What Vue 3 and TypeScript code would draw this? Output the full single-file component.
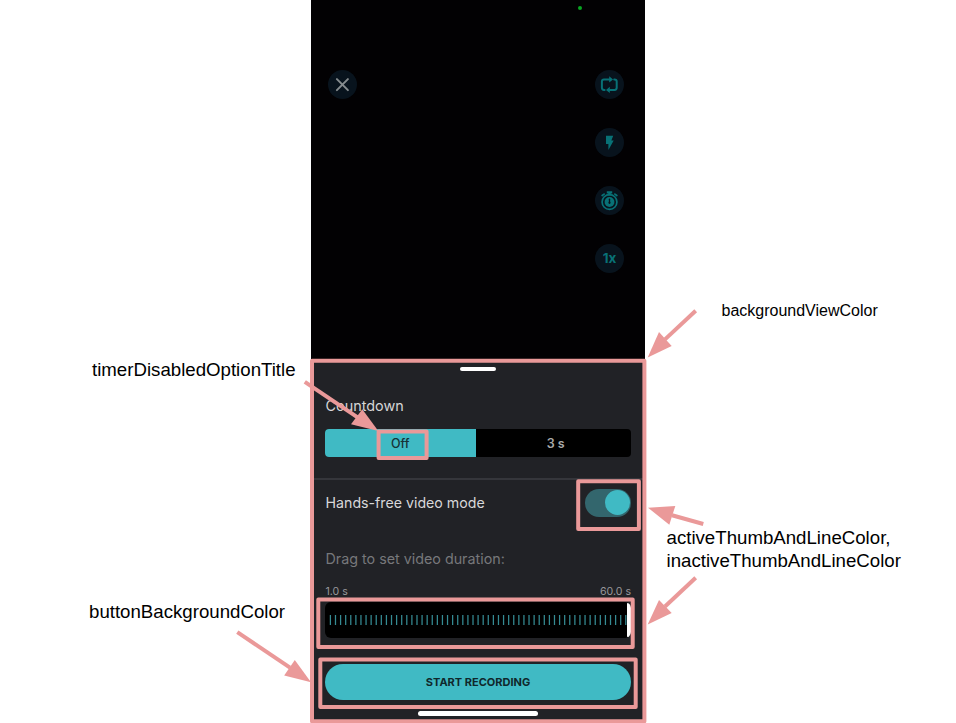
<script setup lang="ts">
interface Label {
  id: string
  lines: string[]
}

interface Frame {
  x: number
  y: number
  w: number
  h: number
}

interface Arrow {
  from: [number, number]
  base: [number, number]
  head: string
}

const ticks: number[] = Array.from({ length: 59 }, (_, i) => 5.4 + i * 5.093)

const labels: Label[] = [
  { id: 'timer', lines: ['timerDisabledOptionTitle'] },
  { id: 'background', lines: ['backgroundViewColor'] },
  { id: 'colors', lines: ['activeThumbAndLineColor,', 'inactiveThumbAndLineColor'] },
  { id: 'button', lines: ['buttonBackgroundColor'] },
]

const frames: Frame[] = [
  { x: 312, y: 360.7, w: 332.4, h: 360.6 },
  { x: 378.6, y: 431.5, w: 48, h: 26.4 },
  { x: 578.2, y: 481.3, w: 60.7, h: 47.6 },
  { x: 318.3, y: 599.5, w: 314.4, h: 47.4 },
  { x: 320.3, y: 659.5, w: 315.4, h: 47.4 },
]

const arrows: Arrow[] = [
  { from: [304.8, 381.8], base: [358, 417.7], head: '378.3,431 362.3,409.3 351,424.3' },
  { from: [695.7, 310.7], base: [665, 339.4], head: '647.7,357.5 659,332 671.7,346' },
  { from: [703.3, 524], base: [672, 515.2], head: '648,507.7 675.3,506 669.3,524.7' },
  { from: [695.7, 577.7], base: [665, 606.5], head: '647.7,624.5 659,600 671.7,613' },
  { from: [237.3, 632.2], base: [290, 667.6], head: '311,682.2 294.8,660 284.2,675.6' },
]
</script>

<template>
  <main class="canvas">
    <section class="phone">
      <div class="camera">
        <i class="live-dot"></i>
        <div class="round close">
          <svg viewBox="0 0 29 29"><path d="M8.9 9.1 19.9 20.1M19.9 9.1 8.9 20.1" fill="none" stroke="#858b8e" stroke-width="2" stroke-linecap="round" /></svg>
        </div>
        <div class="tools">
          <div class="round">
            <svg viewBox="0 0 29 29">
              <g fill="none" stroke="#087176" stroke-width="2" stroke-linecap="round" stroke-linejoin="round">
                <path d="M9.6 19.9H9Q6.9 19.9 6.9 17.8V11.5Q6.9 9.4 9 9.4H15.5" />
                <path d="M19.2 9.4H19.6Q21.7 9.4 21.7 11.5V17.8Q21.7 19.9 19.6 19.9H13.5" />
              </g>
              <path d="M14.2 6.2 18 9.4 14.2 12.6ZM14.8 16.7 11 19.9 14.8 23.1Z" fill="#087176" />
            </svg>
          </div>
          <div class="round">
            <svg viewBox="0 0 29 29"><path d="M11 7.8H18.2L16.4 12.6H18.7L13.4 22V15.9H11Z" fill="#087176" /></svg>
          </div>
          <div class="round">
            <svg viewBox="0 0 29 29">
              <g fill="none" stroke="#087176">
                <circle cx="14.5" cy="16" r="7.4" stroke-width="1.7" />
                <path d="M7.2 9.5 9.1 8.1M21.8 9.5 19.9 8.1" stroke-width="1.8" stroke-linecap="round" />
              </g>
              <circle cx="14.5" cy="16" r="4.9" fill="#087176" />
              <path d="M11.8 5.3H17.2V7.6H15.8V9.5H13.2V7.6H11.8Z" fill="#087176" />
              <path d="M14.5 13.2V16.5" stroke="#08131d" stroke-width="1.3" stroke-linecap="round" />
              <circle cx="14.5" cy="16.8" r="1.1" fill="#08131d" />
            </svg>
          </div>
          <div class="round speed">1x</div>
        </div>
      </div>

      <div class="sheet">
        <div class="grabber"></div>
        <div class="countdown">Countdown</div>
        <div class="segments">
          <div class="segment active">Off</div>
          <div class="segment">3 s</div>
        </div>
        <div class="divider"></div>
        <div class="hands-row">
          <span class="hands">Hands-free video mode</span>
          <span class="toggle"><i class="thumb"></i></span>
        </div>
        <div class="drag">Drag to set video duration:</div>
        <div class="range"><span>1.0 s</span><span>60.0 s</span></div>
        <div class="slider">
          <svg class="ticks" viewBox="0 0 302 36">
            <line v-for="x in ticks" :key="x" :x1="x" :x2="x" y1="13" y2="23" stroke="#358b93" stroke-width="1.25" />
          </svg>
          <i class="slider-end"></i>
        </div>
        <button class="record">START RECORDING</button>
        <div class="home-bar"></div>
      </div>
    </section>

    <svg class="marks" viewBox="0 0 956 723">
      <g fill="none" stroke="#ea9999" stroke-width="4" stroke-linejoin="round">
        <rect v-for="(f, i) in frames" :key="i" :x="f.x" :y="f.y" :width="f.w" :height="f.h" />
        <line v-for="(a, i) in arrows" :key="i" :x1="a.from[0]" :y1="a.from[1]" :x2="a.base[0]" :y2="a.base[1]" />
      </g>
      <polygon v-for="(a, i) in arrows" :key="i" :points="a.head" fill="#ea9999" />
    </svg>

    <div v-for="label in labels" :key="label.id" class="label" :class="label.id">
      <div v-for="line in label.lines" :key="line">{{ line }}</div>
    </div>
  </main>
</template>

<style>
body {
  background: #fff;
  overflow: hidden;
}
</style>

<style scoped>
.canvas {
  position: relative;
  width: 956px;
  height: 723px;
  overflow: hidden;
  background: #fff;
  display: flex;
  box-sizing: border-box;
  padding-left: 311px;
}
.phone {
  width: 334px;
  height: 723px;
  display: flex;
  flex-direction: column;
  font-family: Inter, "Liberation Sans", sans-serif;
}
.camera {
  position: relative;
  box-sizing: border-box;
  height: 359px;
  padding: 70px 21px 0 17px;
  background: #020103;
  display: flex;
  justify-content: space-between;
  align-items: flex-start;
}
.live-dot {
  position: absolute;
  left: 266.5px;
  top: 5.5px;
  width: 4px;
  height: 4px;
  border-radius: 50%;
  background: #08a522;
}
.round {
  width: 29px;
  height: 29px;
  border-radius: 50%;
  background: #08131d;
}
.round svg {
  display: block;
  width: 29px;
  height: 29px;
}
.tools {
  display: flex;
  flex-direction: column;
  gap: 29px;
}
.speed {
  color: #087176;
  font-size: 13.5px;
  font-weight: 700;
  line-height: 29px;
  text-align: center;
}
.sheet {
  box-sizing: border-box;
  height: 364px;
  padding: 7.5px 14px 0;
  background: #212226;
  display: flex;
  flex-direction: column;
}
.grabber {
  align-self: center;
  width: 36px;
  height: 4px;
  border-radius: 2px;
  background: #fff;
}
.countdown {
  margin-top: 25px;
  height: 20px;
  line-height: 20px;
  color: #d5d5d7;
  font-size: 14.4px;
  padding-left: 0.5px;
}
.segments {
  margin-top: 13px;
  height: 28.5px;
  display: flex;
  border-radius: 4px;
  overflow: hidden;
  background: #000;
}
.segment {
  box-sizing: border-box;
  flex: none;
  width: 155.5px;
  padding-left: 5px;
  line-height: 29px;
  text-align: center;
  font-size: 12.5px;
  font-weight: 600;
  color: #aaa;
}
.segment.active {
  width: 150.5px;
  padding: 0;
  background: #40bac4;
  color: #173236;
  font-weight: 500;
}
.divider {
  margin: 20.5px -14px 0;
  height: 2px;
  background: #35363b;
}
.hands-row {
  margin-top: 9px;
  height: 28px;
  display: flex;
  align-items: center;
  justify-content: space-between;
}
.hands {
  padding-left: 0.5px;
  color: #d8d8da;
  font-size: 14.2px;
}
.toggle {
  box-sizing: border-box;
  width: 46px;
  height: 28px;
  padding: 1.5px;
  border-radius: 14px;
  background: #33666d;
  display: flex;
  justify-content: flex-end;
}
.thumb {
  width: 25px;
  height: 25px;
  border-radius: 50%;
  background: #40bac4;
}
.drag {
  margin-top: 32.5px;
  padding-left: 0.5px;
  height: 20px;
  line-height: 20px;
  font-size: 14.3px;
  color: #77787b;
}
.range {
  margin-top: 16px;
  height: 14px;
  line-height: 14px;
  padding-left: 0.5px;
  display: flex;
  justify-content: space-between;
  color: #98989b;
  font-size: 10.6px;
}
.slider {
  margin-top: 3px;
  height: 36px;
  border-radius: 6px;
  overflow: hidden;
  background: #000;
  display: flex;
  align-items: center;
}
.ticks {
  width: 302px;
  flex: none;
  height: 36px;
}
.slider-end {
  width: 4px;
  height: 34px;
  border-radius: 1px 4px 4px 1px;
  background: #fff;
}
.record {
  margin: 26.3px 0 0;
  padding: 0;
  border: 0;
  height: 36px;
  border-radius: 18px;
  background: #40bac4;
  color: #10282c;
  font-family: inherit;
  font-size: 11px;
  font-weight: 700;
  line-height: 36px;
}
.home-bar {
  align-self: center;
  margin-top: 11px;
  width: 120px;
  height: 4.5px;
  border-radius: 3px;
  background: #fff;
}
.marks {
  position: absolute;
  left: 0;
  top: 0;
  width: 956px;
  height: 723px;
}
.label {
  position: absolute;
  color: #000;
  font-family: "Liberation Sans", Arial, sans-serif;
  font-size: 18.67px;
  line-height: 22.5px;
  white-space: nowrap;
}
.timer {
  left: 92px;
  top: 359px;
}
.background {
  left: 721.5px;
  top: 300px;
  font-size: 16px;
}
.colors {
  left: 666.5px;
  top: 527px;
}
.button {
  left: 89px;
  top: 601px;
}
</style>
